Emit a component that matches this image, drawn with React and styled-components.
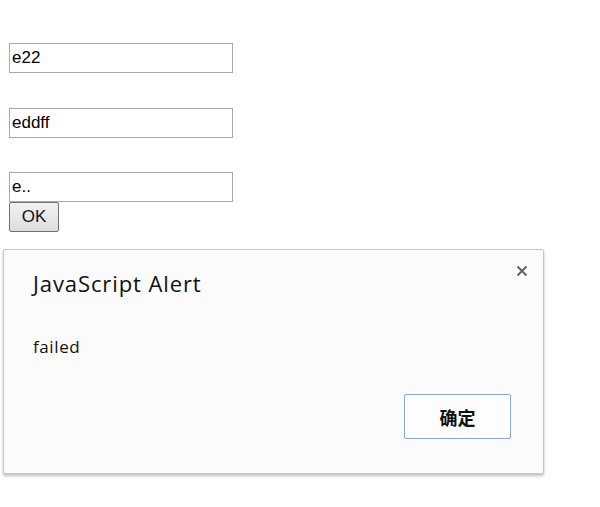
import React from 'react';
import styled, { createGlobalStyle } from 'styled-components';

const GlobalStyle = createGlobalStyle`
  html, body {
    margin: 0;
    background: #ffffff;
  }
  body {
    padding: 8px 9px;
    font-family: "Liberation Sans", Arial, sans-serif;
  }
`;

const Form = styled.form`
  display: flex;
  flex-direction: column;
  align-items: flex-start;
  padding-top: 35px;
`;

const Field = styled.input`
  box-sizing: border-box;
  width: 224px;
  height: 30px;
  margin: 0 0 ${p => p.$space}px 0;
  padding: 1px 2px;
  border: 1px solid #a9a9a9;
  font-family: "Liberation Sans", Arial, sans-serif;
  font-size: 17px;
  color: #000;
  background: #fff;
  outline: none;
`;

const OkButton = styled.button`
  box-sizing: border-box;
  width: 50px;
  height: 30px;
  padding: 0;
  border: 1px solid #707070;
  border-radius: 2px;
  background: linear-gradient(#f2f2f2, #dddddd);
  font-family: "Liberation Sans", Arial, sans-serif;
  font-size: 17px;
  color: #111;
`;

const Dialog = styled.div`
  position: absolute;
  left: 3px;
  top: 249px;
  box-sizing: border-box;
  width: 541px;
  height: 225px;
  display: flex;
  flex-direction: column;
  padding: 19px 28px 34px 29px;
  border: 1px solid #c6c6c6;
  border-radius: 2px;
  background: #fbfbfb;
  box-shadow: 0 2px 3px rgba(0, 0, 0, 0.25);
  font-family: "Open Sans", "Noto Sans", "Noto Sans CJK SC", sans-serif;
  color: #111;
`;

const Title = styled.div`
  font-size: 22px;
  letter-spacing: 0.9px;
  line-height: 28px;
`;

const Message = styled.div`
  margin-top: 38px;
  font-size: 17px;
  letter-spacing: 0.6px;
  line-height: 24px;
  flex: 1;
`;

const Footer = styled.div`
  display: flex;
  justify-content: flex-end;
  padding-right: 4px;
`;

const ConfirmButton = styled.button`
  box-sizing: border-box;
  width: 107px;
  height: 45px;
  border: 1px solid #8ca6d6;
  border-radius: 2px;
  background: #fdfdfd;
  font-family: "Noto Sans CJK SC", sans-serif;
  font-size: 18px;
  font-weight: 700;
  color: #111;
`;

const Close = styled.span`
  position: absolute;
  top: 14px;
  right: 14px;
  width: 14px;
  height: 14px;
  display: flex;
`;

export default function App() {
  return (
    <>
      <GlobalStyle />
      <Form onSubmit={e => e.preventDefault()}>
        <Field $space={35} defaultValue="e22" />
        <Field $space={34} defaultValue="eddff" />
        <Field $space={0} defaultValue="e.." />
        <OkButton type="submit">OK</OkButton>
      </Form>

      <Dialog role="alertdialog">
        <Close>
          <svg width="14" height="14" viewBox="0 0 14 14">
            <path d="M2.5 2.5 L11.5 11.5 M11.5 2.5 L2.5 11.5" stroke="#5f5f5f" strokeWidth="1.8" />
          </svg>
        </Close>
        <Title>JavaScript Alert</Title>
        <Message>failed</Message>
        <Footer>
          <ConfirmButton>确定</ConfirmButton>
        </Footer>
      </Dialog>
    </>
  );
}
